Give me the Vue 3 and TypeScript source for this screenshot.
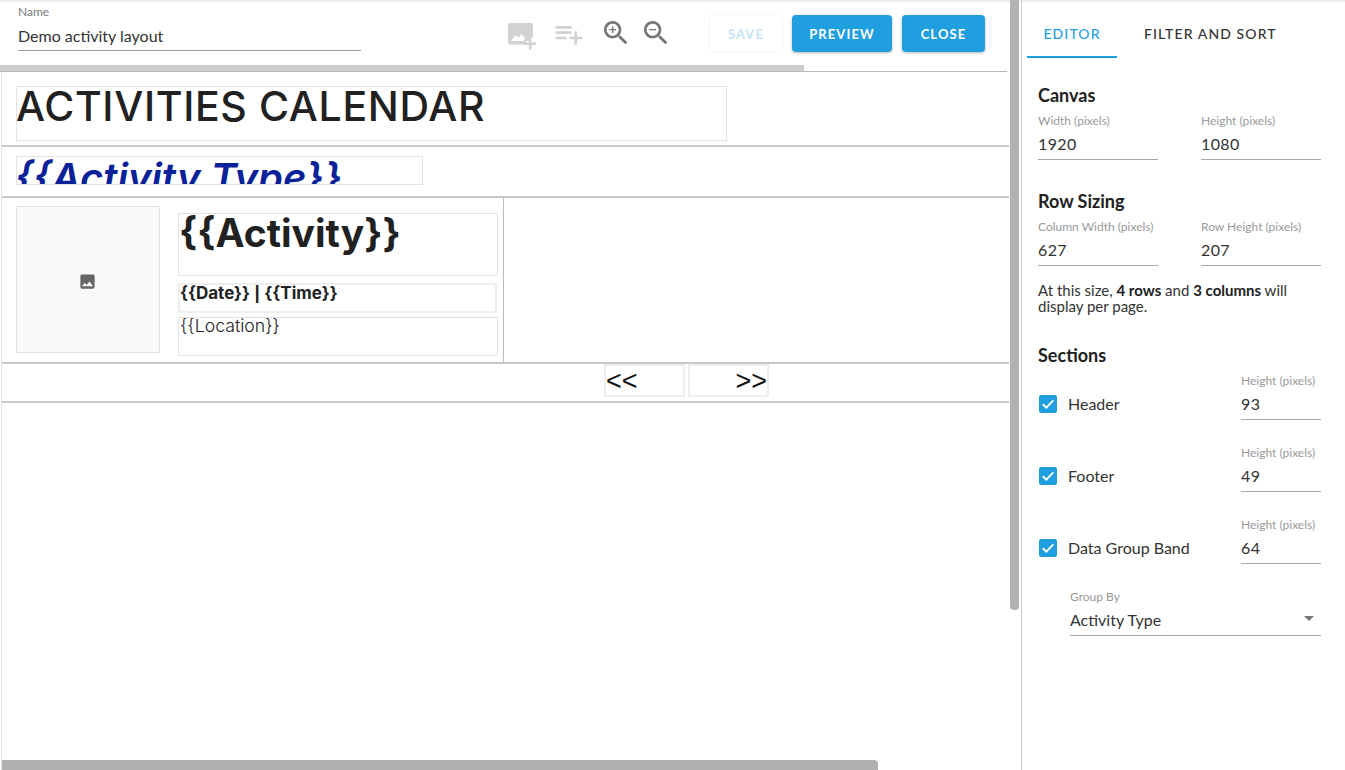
<template>
  <div class="page">
    <main class="main">
      <header class="toolbar">
        <div class="name-field">
          <label>Name</label>
          <div class="name-value">Demo activity layout</div>
        </div>
        <div class="tools">
          <svg class="tool light first" viewBox="0 0 30 30" width="30" height="30">
            <path d="M3 2h21a2 2 0 0 1 2 2v12.500h-3.500V20H19v3.500H3a2 2 0 0 1-2-2V4a2 2 0 0 1 2-2zM4 20h13l1-2.500-3.500-4.500-3 3.700-3-2.700z" fill-rule="evenodd" />
            <path d="M22 17h2.500v4.500H29V24h-4.500v4.500H22V24h-4.500v-2.500H22z" />
          </svg>
          <svg class="tool light list-add" viewBox="0 0 24 24" width="32" height="32">
            <path d="M14 10H2v2h12v-2zm0-4H2v2h12V6zm4 8v-4h-2v4h-4v2h4v4h2v-4h4v-2h-4zM2 16h8v-2H2v2z" />
          </svg>
          <svg class="tool dark zoom-in" viewBox="0 0 24 24" width="32" height="32">
            <path d="M15.500 14h-.79l-.28-.27C15.410 12.590 16 11.110 16 9.500 16 5.910 13.090 3 9.500 3S3 5.910 3 9.500 5.910 16 9.500 16c1.610 0 3.090-.59 4.230-1.570l.27.280v.79l5 4.990L20.490 19l-4.990-5zm-6 0C7.010 14 5 11.990 5 9.500S7.010 5 9.500 5 14 7.010 14 9.500 11.990 14 9.500 14zm2.500-4h-2v2H9v-2H7V9h2V7h1v2h2v1z" />
          </svg>
          <svg class="tool dark" viewBox="0 0 24 24" width="32" height="32">
            <path d="M15.500 14h-.79l-.28-.27C15.410 12.590 16 11.110 16 9.500 16 5.910 13.090 3 9.500 3S3 5.910 3 9.500 5.910 16 9.500 16c1.610 0 3.090-.59 4.230-1.570l.27.280v.79l5 4.990L20.490 19l-4.990-5zm-6 0C7.010 14 5 11.990 5 9.500S7.010 5 9.500 5 14 7.010 14 9.500 11.990 14 9.500 14zM7 9h5v1H7z" />
          </svg>
        </div>
        <div class="actions">
          <button class="btn save">SAVE</button>
          <button class="btn preview">PREVIEW</button>
          <button class="btn close">CLOSE</button>
        </div>
      </header>

      <div class="top-scroll"><div class="top-thumb"></div></div>

      <section class="canvas">
        <div class="band header-band">
          <div class="el title"><span>ACTIVITIES CALENDAR</span></div>
        </div>
        <div class="band group-band">
          <div class="el group"><span>&#123;&#123;Activity Type&#125;&#125;</span></div>
        </div>
        <div class="band row-band">
          <div class="row-cell">
            <div class="el picture">
              <svg viewBox="0 0 24 24" width="19" height="19">
                <path d="M21 19V5c0-1.100-.9-2-2-2H5c-1.100 0-2 .9-2 2v14c0 1.100.9 2 2 2h14c1.100 0 2-.9 2-2zM8.500 13.500l2.500 3.010L14.500 12l4.500 6H5l3.500-4.500z" />
              </svg>
            </div>
            <div class="el activity"><span>&#123;&#123;Activity&#125;&#125;</span></div>
            <div class="el datetime"><span>&#123;&#123;Date&#125;&#125; | &#123;&#123;Time&#125;&#125;</span></div>
            <div class="el location"><span>&#123;&#123;Location&#125;&#125;</span></div>
          </div>
        </div>
        <div class="band footer-band">
          <div class="el prev">&lt;&lt;</div>
          <div class="el next">&gt;&gt;</div>
        </div>
        <div class="hscroll"></div>
      </section>

      <div class="vscroll"></div>
    </main>

    <aside class="panel">
      <nav class="tabs">
        <div class="tab active">EDITOR</div>
        <div class="tab">FILTER AND SORT</div>
      </nav>

      <div class="panel-body">
        <h3>Canvas</h3>
        <div class="pair">
          <div class="field" v-for="f in canvasFields" :key="f.label">
            <label>{{ f.label }}</label>
            <div class="value">{{ f.value }}</div>
          </div>
        </div>

        <h3 class="next-head">Row Sizing</h3>
        <div class="pair">
          <div class="field" v-for="f in rowFields" :key="f.label">
            <label>{{ f.label }}</label>
            <div class="value">{{ f.value }}</div>
          </div>
        </div>
        <p class="note">At this size, <b>4 rows</b> and <b>3 columns</b> will display per page.</p>

        <h3 class="sections-head">Sections</h3>
        <div class="section-row" v-for="s in sections" :key="s.name">
          <span class="check">
            <svg viewBox="0 0 18 18" width="18" height="18">
              <path d="M3.800 9.200l3.500 3.400 7-7.200" fill="none" stroke="#fff" stroke-width="2" />
            </svg>
          </span>
          <span class="section-name">{{ s.name }}</span>
          <div class="field small">
            <label>Height (pixels)</label>
            <div class="value">{{ s.height }}</div>
          </div>
        </div>

        <div class="field select">
          <label>Group By</label>
          <div class="value">Activity Type<i class="caret"></i></div>
        </div>
      </div>
    </aside>
  </div>
</template>

<script setup lang="ts">
const canvasFields = [
  { label: 'Width (pixels)', value: '1920' },
  { label: 'Height (pixels)', value: '1080' },
]

const rowFields = [
  { label: 'Column Width (pixels)', value: '627' },
  { label: 'Row Height (pixels)', value: '207' },
]

const sections = [
  { name: 'Header', height: 93 },
  { name: 'Footer', height: 49 },
  { name: 'Data Group Band', height: 64 },
]
</script>

<style>
html,
body {
  margin: 0;
  height: 100%;
  overflow: hidden;
  background: #fff;
}
</style>

<style scoped>
.page {
  display: flex;
  width: 1345px;
  height: 770px;
  overflow: hidden;
  font-family: Lato, "Open Sans", sans-serif;
  color: #212121;
  background: #fff;
}

.main {
  position: relative;
  display: flex;
  flex-direction: column;
  width: 1021px;
  flex: none;
  border-right: 1px solid #cfcfcf;
  box-sizing: content-box;
}

/* toolbar */
.toolbar {
  display: flex;
  height: 65px;
  flex: none;
  box-shadow: inset 0 3px 3px -2px rgba(0, 0, 0, 0.12);
}

.name-field {
  width: 343px;
  height: 51px;
  margin-left: 18px;
  padding-top: 5px;
  box-sizing: border-box;
  border-bottom: 1px solid #999;
}

.name-field label {
  display: block;
  font-size: 12px;
  line-height: 13px;
  color: #777;
}

.name-value {
  margin-top: 8px;
  font-size: 16px;
  line-height: 20px;
  color: #333;
}

.tools {
  display: flex;
  margin-left: 146px;
  padding-top: 17px;
}

.tool {
  flex: none;
}

.tool.first {
  margin-top: 4px;
}

.tool.light {
  fill: #d2d2d2;
}

.tool.list-add {
  margin: 1px 0 0 16px;
}

.tool.dark {
  fill: #757575;
  margin-left: 8px;
}

.tool.dark.zoom-in {
  margin-left: 15px;
}

.actions {
  display: flex;
  gap: 10px;
  margin-left: 38px;
  padding-top: 15px;
}

.btn {
  height: 37px;
  padding: 0;
  border: 0;
  border-radius: 4px;
  font-family: Lato, sans-serif;
  font-size: 13px;
  font-weight: 700;
  letter-spacing: 1.1px;
  color: #fff;
  background: #1f9fdf;
  box-shadow: 0 1px 3px rgba(0, 0, 0, 0.28);
}

.btn.save {
  width: 72px;
  color: #c5e5f6;
  background: #fff;
  box-shadow: 0 0 3px rgba(0, 0, 0, 0.08);
}

.btn.preview {
  width: 100px;
}

.btn.close {
  width: 83px;
}

.top-scroll {
  height: 6px;
  width: 1007px;
  flex: none;
  border-bottom: 1px solid #bbb;
}

.top-thumb {
  width: 804px;
  height: 100%;
  background: #cdcdcd;
}

/* design surface */
.canvas {
  position: relative;
  flex: 1;
  width: 1007px;
  margin-left: 1px;
  border-left: 1px solid #e4e4e4;
  font-family: Inter, sans-serif;
  overflow: hidden;
}

.band {
  position: relative;
  border-bottom: 2px solid #c8c8c8;
  box-sizing: border-box;
  box-shadow: -1px 0 0 #c4c4c4;
}

.header-band {
  height: 75px;
}

.group-band {
  height: 51px;
}

.row-band {
  height: 166px;
}

.footer-band {
  height: 39px;
}

.row-cell {
  position: absolute;
  top: 0;
  left: 0;
  width: 501px;
  height: 164px;
  border-right: 1px solid #bbb;
}

.el {
  position: absolute;
  box-sizing: border-box;
  border: 1px solid #e2e2e2;
  overflow: hidden;
}

.title {
  left: 14px;
  top: 14px;
  width: 711px;
  height: 55px;
  font-size: 41px;
  font-weight: 500;
  line-height: 38px;
  letter-spacing: 0.65px;
}

.title span {
  margin-left: -1px;
}

.group {
  left: 14px;
  top: 9px;
  width: 407px;
  height: 29px;
  font-size: 40px;
  font-weight: 600;
  font-style: italic;
  line-height: 42px;
  color: #0a2299;
}

.group span {
  margin-left: -2px;
}

.picture {
  left: 14px;
  top: 8px;
  width: 144px;
  height: 147px;
  padding: 4px 1px 0 0;
  display: flex;
  align-items: center;
  justify-content: center;
  background: #fafafa;
  fill: #666;
}

.activity {
  left: 176px;
  top: 15px;
  width: 320px;
  height: 63px;
  font-size: 39px;
  font-weight: 700;
  line-height: 38px;
}

.datetime {
  left: 176px;
  top: 85px;
  width: 319px;
  height: 30px;
  border-width: 2px;
  border-color: #eee;
  font-size: 17px;
  font-weight: 700;
  line-height: 16px;
}

.location {
  left: 176px;
  top: 119px;
  width: 320px;
  height: 39px;
  padding-left: 1px;
  font-size: 17.700px;
  font-weight: 300;
  line-height: 16px;
}

.prev,
.next {
  top: 0;
  width: 81px;
  height: 33px;
  border-width: 2px;
  border-color: #eee;
  font-family: "Liberation Sans", sans-serif;
  font-size: 27px;
  line-height: 30px;
  color: #111;
}

.prev {
  left: 602px;
}

.next {
  left: 686px;
  text-align: right;
}

.hscroll {
  position: absolute;
  left: -2px;
  bottom: 0;
  width: 878px;
  height: 10px;
  border-radius: 0 4px 0 0;
  background: #b0b0b0;
}

.vscroll {
  position: absolute;
  top: 0;
  left: 1010px;
  width: 9px;
  height: 610px;
  border-radius: 0 0 4px 4px;
  background: #b2b2b2;
}

/* right panel */
.panel {
  flex: 1;
  min-width: 0;
  box-shadow: inset 0 3px 3px -2px rgba(0, 0, 0, 0.12);
}

.tabs {
  display: flex;
  height: 58px;
  margin-left: 5px;
}

.tab {
  padding: 26px 0 0;
  margin-left: 27px;
  box-sizing: border-box;
  font-size: 14px;
  line-height: 16px;
  letter-spacing: 1.1px;
  font-weight: 500;
  color: #333;
}

.tab.active {
  width: 90px;
  margin-left: 0;
  text-align: center;
  color: #1f9fdf;
  border-bottom: 2px solid #1f9fdf;
}

.panel-body {
  padding: 27px 24px 0 16px;
}

h3 {
  margin: 0;
  font-size: 18px;
  line-height: 20px;
  font-weight: 700;
}

.next-head {
  margin-top: 31px;
}

.pair {
  display: grid;
  grid-template-columns: 120px 120px;
  column-gap: 43px;
  margin-top: 9px;
}

.field label {
  display: block;
  font-size: 12px;
  line-height: 13px;
  color: #999;
}

.field .value {
  position: relative;
  height: 33px;
  box-sizing: border-box;
  padding-top: 7px;
  font-size: 16px;
  line-height: 20px;
  letter-spacing: 0.4px;
  color: #333;
  border-bottom: 1px solid #a8a8a8;
}

.note {
  margin: 16px 0 0;
  font-size: 15px;
  line-height: 16px;
  color: #333;
}

.note b {
  color: #212121;
}

.sections-head {
  margin-top: 31px;
}

.section-row {
  display: flex;
  align-items: flex-start;
  height: 72px;
}

.check {
  flex: none;
  width: 18px;
  height: 18px;
  margin: 30px 0 0 1px;
  border-radius: 2px;
  background: #1f9fdf;
}

.check svg {
  display: block;
}

.section-name {
  flex: 1;
  margin: 29px 0 0 11px;
  font-size: 16px;
  line-height: 20px;
  color: #333;
}

.field.small {
  width: 80px;
  flex: none;
  margin-top: 9px;
}

.select {
  margin: 9px 0 0 32px;
}

.select .value {
  letter-spacing: 0;
}

.caret {
  position: absolute;
  right: 7px;
  top: 13px;
  border-left: 5px solid transparent;
  border-right: 5px solid transparent;
  border-top: 5px solid #757575;
}
</style>
